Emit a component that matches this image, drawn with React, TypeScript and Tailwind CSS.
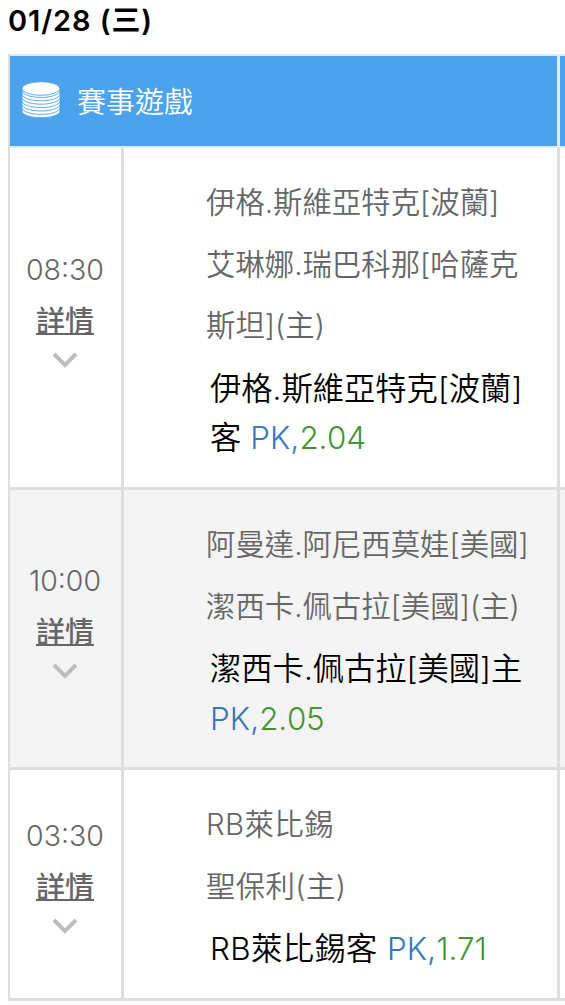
import clsx from "clsx";

interface Match {
  time: string;
  teams: string[];
  pick: string;
  odds: string;
  className: string;
}

const matches: Match[] = [
  {
    time: "08:30",
    teams: ["伊格.斯維亞特克[波蘭]", "艾琳娜.瑞巴科那[哈薩克斯坦](主)"],
    pick: "伊格.斯維亞特克[波蘭]客",
    odds: "2.04",
    className: "h-[342px]",
  },
  {
    time: "10:00",
    teams: ["阿曼達.阿尼西莫娃[美國]", "潔西卡.佩古拉[美國](主)"],
    pick: "潔西卡.佩古拉[美國]主",
    odds: "2.05",
    className: "h-[280px]",
  },
  {
    time: "03:30",
    teams: ["RB萊比錫", "聖保利(主)"],
    pick: "RB萊比錫客",
    odds: "1.71",
    className: "h-[231px] tracking-[0.4px]",
  },
];

const CoinsIcon = () => (
  <svg width="40" height="40" viewBox="0 0 40 40" fill="#fff">
    {[30, 26.6, 23.2, 19.8, 16.4, 13, 9.6].map((y) => (
      <path
        key={y}
        d={`M1 ${y - 2}v2c0 3.9 8.5 6.8 19 6.8s19-2.9 19-6.8v-2z`}
        stroke="#4aa3ec"
        strokeWidth="0.9"
      />
    ))}
    <ellipse cx="20" cy="7.5" rx="19" ry="6.8" stroke="#4aa3ec" strokeWidth="0.9" />
  </svg>
);

const Chevron = () => (
  <svg width="26" height="16" viewBox="0 0 26 16" fill="none">
    <path d="M2 2l11 11L24 2" stroke="#bdbdbd" strokeWidth="4" />
  </svg>
);

const MatchRow = ({ match, striped }: { match: Match; striped: boolean }) => (
  <div
    className={clsx(
      "flex border-b-3 border-[#dedede]",
      match.className,
      striped ? "bg-[#f4f4f4]" : "bg-white",
    )}
  >
    <div className="flex w-[114px] shrink-0 flex-col items-center justify-center border-r-3 border-[#dedede] pr-px pb-[18px] tracking-normal text-[#666]">
      <div className="h-[52px] text-[28.5px] leading-[52px] font-[350]">
        {match.time}
      </div>
      <a className="h-[52px] text-[29px] leading-[52px] font-medium underline decoration-2 underline-offset-1 [text-decoration-skip-ink:none]">
        詳情
      </a>
      <div className="mt-1 h-[22px]">
        <Chevron />
      </div>
    </div>
    <div className="w-[436px] shrink-0 border-r-3 border-[#dedede] pt-6 pl-[82px]">
      <div className="w-[330px] text-[29.4px] leading-[61.5px] font-[350] text-[#666]">
        {match.teams.map((team) => (
          <div key={team} className="break-all">
            {team}
          </div>
        ))}
      </div>
      <div className="mt-2 ml-1 w-[330px] text-[31.3px] leading-[49.5px] font-[350] text-black [font-kerning:none]">
        {match.pick}{" "}
        <span className="tracking-[0.2px] text-[#3478bd]">PK,</span>
        <span className="tracking-[-0.2px] text-[#41962f]">{match.odds}</span>
      </div>
    </div>
  </div>
);

export default function App() {
  return (
    <div className="h-[1005px] overflow-hidden bg-white pl-2 font-['Inter','Noto_Sans_CJK_TC',sans-serif]">
      <h1 className="h-[54px] text-[29px] leading-[42px] font-semibold tracking-[0.9px] whitespace-pre text-black">
        01/28 (三)
      </h1>
      <div className="w-[600px] border-l-2 border-[#dedede]">
        <div className="flex h-[94px] border-y-2 border-[#dcecf9] bg-[#4aa3ec]">
          <div className="flex w-[550px] items-center border-r-3 border-[#dcecf9] pl-[11px] text-[29px] font-[350] text-white">
            <CoinsIcon />
            <span className="mt-[3px] ml-4">賽事遊戲</span>
          </div>
        </div>
        {matches.map((match, i) => (
          <MatchRow key={match.time} match={match} striped={i % 2 === 1} />
        ))}
      </div>
    </div>
  );
}
